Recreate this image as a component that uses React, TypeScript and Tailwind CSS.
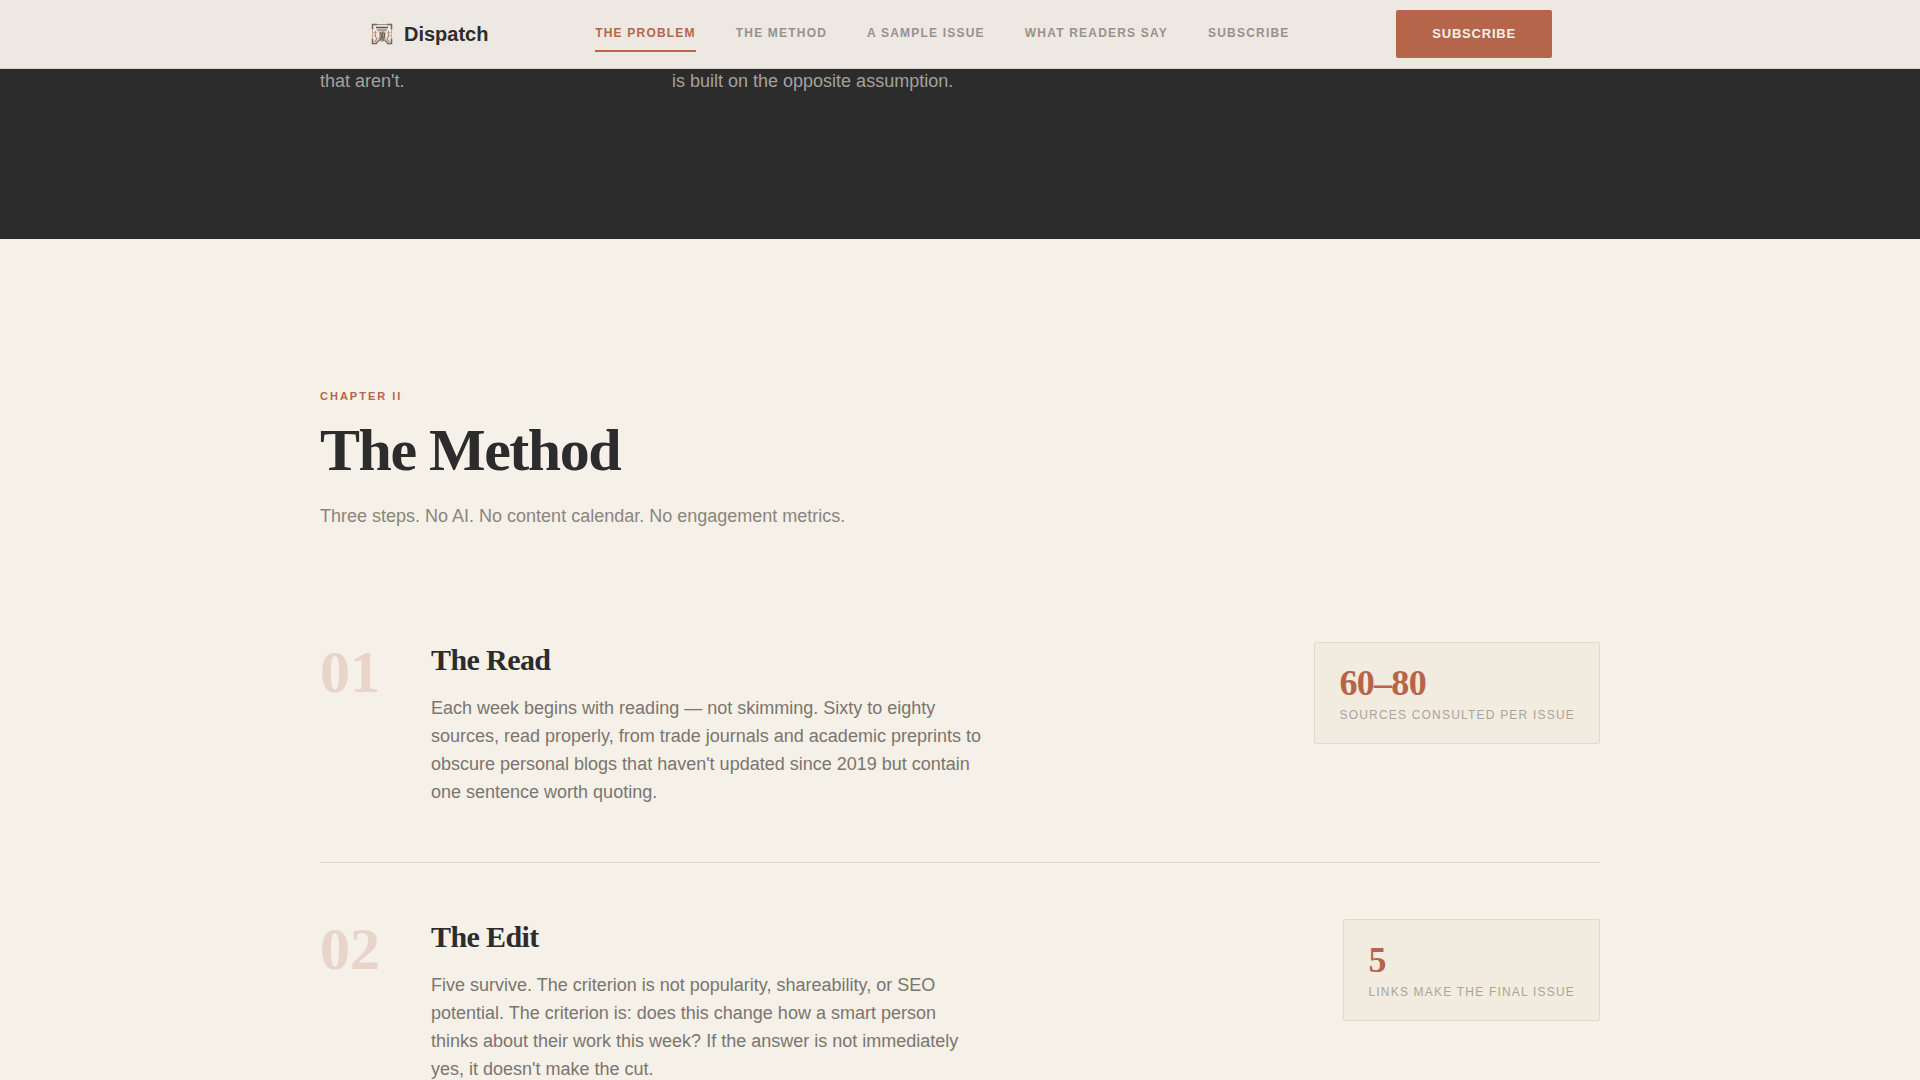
const navLinks = [
  { label: 'The Problem', href: '#problem', active: true },
  { label: 'The Method', href: '#method', active: false },
  { label: 'A Sample Issue', href: '#sample', active: false },
  { label: 'What Readers Say', href: '#readers', active: false },
  { label: 'Subscribe', href: '#subscribe', active: false },
];

const steps = [
  {
    number: '01',
    title: 'The Read',
    body: "Each week begins with reading — not skimming. Sixty to eighty sources, read properly, from trade journals and academic preprints to obscure personal blogs that haven't updated since 2019 but contain one sentence worth quoting.",
    stat: '60–80',
    statLabel: 'Sources consulted per issue',
  },
  {
    number: '02',
    title: 'The Edit',
    body: "Five survive. The criterion is not popularity, shareability, or SEO potential. The criterion is: does this change how a smart person thinks about their work this week? If the answer is not immediately yes, it doesn't make the cut.",
    stat: '5',
    statLabel: 'Links make the final issue',
  },
];

function Logo() {
  return (
    <svg viewBox="0 0 28 28" className="w-7 h-7" fill="none" aria-hidden="true">
      {/* Corner frame */}
      <path d="M4.5 9.500V4.500H9M19 4.500h4.500v5M4.500 18.500v5H9M19 23.500h4.500v-5" stroke="#75655a" strokeWidth="1.500" />
      <path d="M9 4.500h10" stroke="#a08f84" />
      <path d="M4.500 9.500v9M23.500 9.500v9" stroke="#d3a99c" />
      <path d="M4 12.500h5M19 12.500h5M4 15.500h4M20 15.500h4" stroke="#dba898" />
      {/* Column */}
      <path d="M8 7.500h12" stroke="#665a50" strokeWidth="1.600" />
      <path d="M9 10h10" stroke="#82766b" strokeWidth="1.200" />
      <path d="M11 11.500h6.500l-.5 2.500.5 5-1.500 2.500h-4L10.500 19l1-4z" fill="#a39a88" />
      <path d="M12 12.500l1.500 3-1 4.500M15 11.500l-1 4 1.500 5M17 13l-1 5" stroke="#62594e" />
      <path d="M7.500 11v5.500L9 19l-2.500 3M20.500 11v5.500L19 19l2.500 3" stroke="#b98b7b" strokeWidth="1.200" />
      <path d="M8.500 23l2.500-3M19.500 23L17 20" stroke="#75655a" strokeWidth="1.200" />
    </svg>
  );
}

export default function App() {
  return (
    <div className="min-h-screen bg-[#f5f0e8] font-['Liberation_Sans',sans-serif] text-[#2c2c2c]">
      {/* Header */}
      <header className="fixed inset-x-0 top-0 z-40 border-b border-[#d8d2ca] bg-[#ede8e1]">
        <div className="max-w-7xl mx-auto px-12 h-17 flex items-center justify-between">
          <a href="#top" className="flex items-center gap-2">
            <Logo />
            <span className="text-xl font-bold">Dispatch</span>
          </a>
          <nav className="flex items-center gap-10">
            {navLinks.map((link) => (
              <a
                key={link.href}
                href={link.href}
                className={`border-b-2 py-2 text-xs leading-[18px] font-bold uppercase tracking-[1.2px] ${
                  link.active ? 'border-[#b5654a] text-[#b5654a]' : 'border-transparent text-[#97928b]'
                }`}
              >
                {link.label}
              </a>
            ))}
          </nav>
          <button type="button" className="h-12 px-9 rounded-xs bg-[#b5654a] text-[#f5f0e8] text-[13px] font-bold uppercase tracking-[0.8px]">
            Subscribe
          </button>
        </div>
      </header>

      {/* The Problem */}
      <section id="problem" className="bg-[#2c2c2c] pt-[67px] pb-36">
        <div className="max-w-7xl mx-auto grid grid-cols-[288px_288px] gap-16 text-lg leading-7 text-[#a5a19c]">
          <p>that aren't.</p>
          <p>is built on the opposite assumption.</p>
        </div>
      </section>

      {/* The Method */}
      <section id="method" className="pt-36">
        <div className="max-w-7xl mx-auto">
          <p className="text-[11px] leading-[26px] font-bold uppercase tracking-[2px] text-[#b5654a]">Chapter II</p>
          <h2 className="mt-[9px] font-['Liberation_Serif',serif] text-6xl leading-16 font-bold tracking-[-1.5px]">The Method</h2>
          <p className="mt-5 text-lg leading-7 text-[#8a857c]">
            Three steps. No AI. No content calendar. No engagement metrics.
          </p>

          <div className="mt-14 divide-y divide-[#ddd7cf]">
            {steps.map((step) => (
              <article key={step.number} className="py-14 flex items-start">
                <div className="w-[111px] shrink-0 font-['Liberation_Serif',serif] text-6xl font-bold text-[#e8d4c9]">
                  {step.number}
                </div>
                <div className="max-w-[552px]">
                  <h3 className="font-['Liberation_Serif',serif] text-3xl leading-9 font-bold tracking-[-0.6px]">{step.title}</h3>
                  <p className="mt-4 text-lg leading-7 text-[#7a756f]">{step.body}</p>
                </div>
                <div className="ml-auto rounded-xs border border-[#e4d8ca] bg-[#f2ebdf] px-6 py-5">
                  <div className="font-['Liberation_Serif',serif] text-4xl leading-10 font-bold tracking-[-0.7px] text-[#b5654a]">
                    {step.stat}
                  </div>
                  <div className="mt-1 text-xs leading-4 uppercase tracking-[1.2px] text-[#aaa59b]">{step.statLabel}</div>
                </div>
              </article>
            ))}
          </div>
        </div>
      </section>
    </div>
  );
}
